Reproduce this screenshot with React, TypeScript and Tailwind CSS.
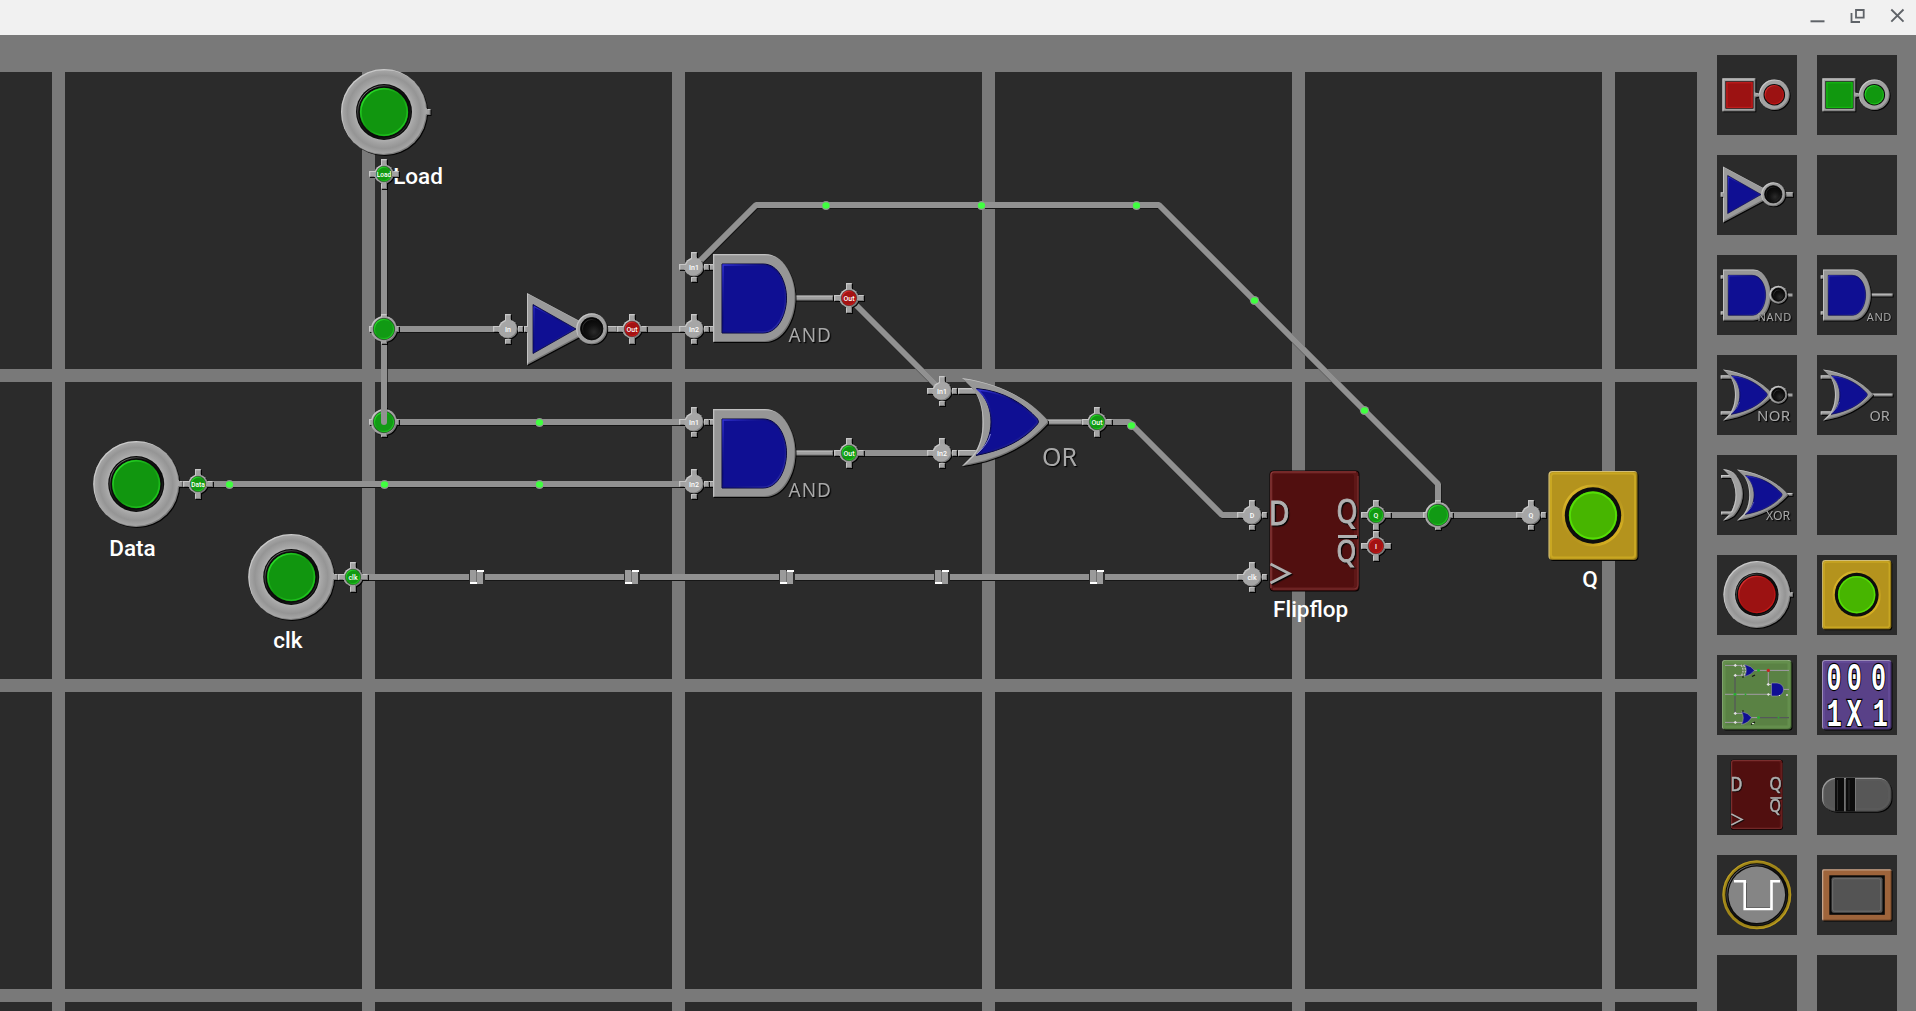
import React from "react";

type Tone = "gray" | "green" | "red";

const FILL: Record<Tone, string> = {
  gray: "#a8a8a8",
  green: "#119a11",
  red: "#a31212",
};

/* Shared filters and gradients for the embossed look of all parts. */
function Defs() {
  return (
    <svg width="0" height="0" className="absolute" aria-hidden="true">
      <defs>
        <filter id="raised" x="-20%" y="-20%" width="140%" height="140%" colorInterpolationFilters="sRGB">
          <feOffset in="SourceAlpha" dx="1.3" dy="1.3" result="off" />
          <feComposite in="SourceAlpha" in2="off" operator="out" result="hi" />
          <feFlood floodColor="#ffffff" floodOpacity="0.4" />
          <feComposite in2="hi" operator="in" result="light" />
          <feOffset in="SourceAlpha" dx="-1.2" dy="-1.2" result="off2" />
          <feComposite in="SourceAlpha" in2="off2" operator="out" result="lo" />
          <feFlood floodColor="#000000" floodOpacity="0.25" />
          <feComposite in2="lo" operator="in" result="dark" />
          <feFlood floodColor="#000000" floodOpacity="0.9" />
          <feComposite in2="off" operator="in" result="shadow" />
          <feMerge>
            <feMergeNode in="shadow" />
            <feMergeNode in="SourceGraphic" />
            <feMergeNode in="dark" />
            <feMergeNode in="light" />
          </feMerge>
        </filter>
        <filter id="cast" x="-10%" y="-10%" width="125%" height="125%" colorInterpolationFilters="sRGB">
          <feDropShadow dx="1.2" dy="1.2" stdDeviation="0" floodColor="#050505" floodOpacity="1" />
        </filter>
        <radialGradient id="disc" cx="0.5" cy="0.5" r="0.5">
          <stop offset="0.62" stopColor="#b4b4b4" />
          <stop offset="0.72" stopColor="#a4a4a4" />
          <stop offset="0.85" stopColor="#959595" />
          <stop offset="0.94" stopColor="#a2a2a2" />
          <stop offset="1" stopColor="#a8a8a8" />
        </radialGradient>
        <radialGradient id="hole" cx="0.6" cy="0.65" r="0.6">
          <stop offset="0" stopColor="#2b2b2b" />
          <stop offset="0.5" stopColor="#121212" />
          <stop offset="1" stopColor="#050505" />
        </radialGradient>
        <linearGradient id="rim" x1="0" y1="0" x2="1" y2="1">
          <stop offset="0" stopColor="#ffffff" stopOpacity="0.65" />
          <stop offset="0.4" stopColor="#ffffff" stopOpacity="0.05" />
          <stop offset="0.65" stopColor="#ffffff" stopOpacity="0" />
          <stop offset="1" stopColor="#ffffff" stopOpacity="0.25" />
        </linearGradient>
        <linearGradient id="capRim" x1="0" y1="0" x2="1" y2="1">
          <stop offset="0" stopColor="#33ff33" stopOpacity="0.9" />
          <stop offset="0.5" stopColor="#33ff33" stopOpacity="0" />
          <stop offset="1" stopColor="#20d020" stopOpacity="0.9" />
        </linearGradient>
        <linearGradient id="redRim" x1="0" y1="0" x2="1" y2="1">
          <stop offset="0" stopColor="#ff5050" stopOpacity="0.9" />
          <stop offset="0.5" stopColor="#e01010" stopOpacity="0.1" />
          <stop offset="1" stopColor="#d02020" stopOpacity="0.9" />
        </linearGradient>
        <linearGradient id="blueRim" x1="0" y1="0" x2="1" y2="1">
          <stop offset="0" stopColor="#3a3ae0" stopOpacity="0.9" />
          <stop offset="0.4" stopColor="#0a0a70" stopOpacity="0.5" />
          <stop offset="1" stopColor="#3434b4" stopOpacity="0.9" />
        </linearGradient>
        <linearGradient id="goldRim" x1="0" y1="0" x2="1" y2="1">
          <stop offset="0" stopColor="#f2cc30" />
          <stop offset="0.5" stopColor="#b5951e" stopOpacity="0.2" />
          <stop offset="1" stopColor="#f0c525" />
        </linearGradient>
      </defs>
    </svg>
  );
}

/* ---------- Parts. Gates have their origin at the left edge, mid height. ---------- */

function GateLabel({ x, y, size, spacing = 0, children }: { x: number; y: number; size: number; spacing?: number; children: string }) {
  return (
    <text
      x={x}
      y={y}
      fill="#a8a8a8"
      fontSize={size}
      letterSpacing={spacing}
      filter="url(#cast)"
      style={{ fontFamily: '"Noto Sans", sans-serif' }}
    >
      {children}
    </text>
  );
}

function AndBody() {
  return (
    <>
      <g filter="url(#raised)">
        <path fill="#969696" d="M0-44H52C70-44 82.500-22 82.500 0S70 44 52 44H0Z" />
      </g>
      <path fill="#0f0f93" stroke="#05053a" strokeWidth="1" d="M9-34H50C66-34 73.500-15 73.500 0S66 35 50 35H9Z" />
      <path fill="none" stroke="url(#blueRim)" strokeWidth="1.400" d="M10-33H50C65-33 72.500-15 72.500 0S65 34 50 34H10Z" />
    </>
  );
}

function AndGate({ stubs = false }: { stubs?: boolean }) {
  return (
    <g>
      <g filter="url(#raised)" fill="#a0a0a0">
        {stubs && <path d="M-4-34H2v6H-4ZM-4 28H2v6H-4Z" />}
        <rect x="80" y="-2.500" width="40" height="5" />
      </g>
      <AndBody />
      <GateLabel x={75.500} y={44} size={19} spacing={1}>AND</GateLabel>
    </g>
  );
}

function OrBody() {
  return (
    <>
      <g filter="url(#raised)">
        <path fill="#979797" d="M0-44C36-39 66-24 86-1.500V1.500C66 24 36 39 0 44L11 33C24 17 24-17 11-33Z" />
      </g>
      <path fill="#0f0f93" stroke="#05053a" strokeWidth="1" d="M14.500-33.500C42-31 62-18 75.500-3Q77.500 0 75.500 2C62 18 42 28 14 33.500C34 17 34-17 14.500-33.500Z" />
      <path fill="none" stroke="url(#blueRim)" strokeWidth="1.500" d="M16-32C42-30 61-17 74.500-2.500Q76 0 74.500 1.500C61 17 42 27 16 32C34 16 34-16 16-32Z" />
      <path fill="none" stroke="#9a9aee" strokeWidth="1" opacity="0.8" d="M28.500 12Q26 22 15 32" />
    </>
  );
}

function OrGate() {
  return (
    <g>
      <g filter="url(#raised)" fill="#a0a0a0">
        <path d="M-4-34H14v6H-4ZM-4 28H14v6H-4Z" />
        <rect x="83" y="-2.500" width="37" height="5" />
      </g>
      <OrBody />
      <GateLabel x={80} y={44} size={25}>OR</GateLabel>
    </g>
  );
}

function Bubble({ x, y, r, hole }: { x: number; y: number; r: number; hole: number }) {
  return (
    <g>
      <circle cx={x} cy={y} r={r} fill="#a0a0a0" filter="url(#raised)" />
      <circle cx={x} cy={y} r={hole} fill="url(#hole)" stroke="#000" strokeWidth="0.800" />
      <circle cx={x} cy={y} r={hole - 2} fill="none" stroke="url(#rim)" strokeWidth="0.800" opacity="0.500" />
    </g>
  );
}

function NotGate() {
  return (
    <g>
      <g filter="url(#raised)" fill="#9a9a9a">
        <rect x="-3" y="-3" width="5" height="6" />
        <rect x="79" y="-3" width="11" height="6" />
        <path d="M0-36L62-3V3L0 36Z" />
      </g>
      <path d="M6-24.500L49 0L6 24.500Z" fill="#0f0f93" stroke="#06063c" strokeWidth="0.800" />
      <path d="M7-22.500L47 0L7 23Z" fill="none" stroke="url(#blueRim)" strokeWidth="1" />
      <Bubble x={64.700} y={-0.300} r={15.500} hole={11.200} />
    </g>
  );
}

function RoundButton({ tone }: { tone: "green" | "red" }) {
  return (
    <g>
      <g filter="url(#raised)">
        <path d="M40-7L43-3H46.500V3H43L40 7Z" fill="#a0a0a0" />
        <circle r="43" fill="url(#disc)" />
      </g>
      <circle r="28" fill="#0b0b0b" />
      <circle r="26.300" fill="none" stroke="url(#rim)" strokeWidth="0.900" />
      <circle r="24.200" fill={tone === "green" ? "#11960f" : "#9c1212"} />
      <circle r="23.200" fill="none" stroke={tone === "green" ? "url(#capRim)" : "url(#redRim)"} strokeWidth="1.600" />
    </g>
  );
}

function Lamp() {
  return (
    <g>
      <rect x="-44.500" y="-44.500" width="89" height="89" rx="4" fill="#b4931d" filter="url(#raised)" />
      <rect x="-42" y="-42" width="84" height="84" rx="3" fill="none" stroke="#c9a722" strokeWidth="2" />
      <circle r="29.500" fill="none" stroke="url(#goldRim)" strokeWidth="3" />
      <circle r="28.200" fill="#0d0d0d" />
      <circle r="24.200" fill="#47b500" />
      <circle r="23" fill="none" stroke="#5aec08" strokeWidth="1.800" opacity="0.750" />
    </g>
  );
}

function FlipflopBody() {
  return (
    <g>
      <rect x="-.5" y="-.5" width="90" height="121" rx="4" fill="#0a0202" />
      <rect width="88.500" height="119.500" rx="4" fill="#5e1717" />
      <rect x="3" y="3" width="81" height="113" rx="2" fill="#510f0f" />
      <path d="M1 117V4Q1 1 4 1H86" fill="none" stroke="#8b3c3c" strokeWidth="1.200" />
      <path d="M3 118H84Q88 118 88 113V5" fill="none" stroke="#7a3030" strokeWidth="1.200" />
      <g fill="#b0b0b0" stroke="#b0b0b0" strokeWidth="1" filter="url(#cast)" style={{ fontFamily: '"Noto Sans", sans-serif' }}>
        <g transform="translate(-1 53.500) scale(.84 1)"><text fontSize="33.500">D</text></g>
        <g transform="translate(66.500 51.500) scale(.84 1)"><text fontSize="32">Q</text></g>
        <g transform="translate(66.500 90.500) scale(.84 1)"><text fontSize="30">Q</text></g>
        <rect x="68.500" y="64.500" width="18" height="2" />
        <path fill="none" strokeWidth="2.800" d="M0.500 93L19 102.500L0.500 112" />
      </g>
    </g>
  );
}

/* ---------- Terminals and wires ---------- */

function Terminal({ x, y, tone = "gray", label }: { x: number; y: number; tone?: Tone; label: string }) {
  const gray = tone === "gray";
  return (
    <g transform={`translate(${x} ${y})`}>
      <g filter="url(#raised)" fill="#a2a2a2">
        <path d="M-15-3H-9V3H-15ZM10-3H15V3H10ZM-3-15H3V-9H-3ZM-3 10H3V15H-3Z" />
        {!gray && <path d="M-11-3H11V3H-11ZM-3-11H3V11H-3Z" />}
        <circle r={9.600} fill={gray ? "#a6a6a6" : "#a2a2a2"} />
      </g>
      {!gray && (
        <>
          <circle r="7.700" fill={FILL[tone]} stroke="#222" strokeWidth="0.500" />
          <circle r="6.800" fill="none" stroke={tone === "green" ? "url(#capRim)" : "url(#redRim)"} strokeWidth="1.200" />
        </>
      )}
      <text
        y="2.500"
        textAnchor="middle"
        fill="#fff"
        fontSize={label.length > 3 ? 6.5 : 7}
        style={{ fontFamily: "Roboto, sans-serif", fontWeight: 500 }}
      >
        {label}
      </text>
    </g>
  );
}

function Junction({ x, y }: { x: number; y: number }) {
  return (
    <g transform={`translate(${x} ${y})`}>
      <g filter="url(#raised)" fill="#a2a2a2">
        <path d="M-15-3H15V3H-15ZM-3-15H3V15H-3Z" />
        <circle r="13" />
      </g>
      <circle r="10.700" fill="#119a14" stroke="#222" strokeWidth="0.600" />
      <circle r="9.700" fill="none" stroke="url(#capRim)" strokeWidth="1.200" />
    </g>
  );
}

function Wire({ d }: { d: string }) {
  return (
    <g fill="none" strokeWidth="6" strokeLinejoin="bevel">
      <path d={d} stroke="#161616" transform="translate(.7 1)" />
      <path d={d} stroke="#919191" />
    </g>
  );
}

function Signal({ x, y }: { x: number; y: number }) {
  return (
    <g>
      <circle cx={x} cy={y} r="4.600" fill="#919191" />
      <ellipse cx={x} cy={y} rx="3.600" ry="3.300" fill="#40ff40" />
    </g>
  );
}

/* A clock edge travelling along the wire. */
function Pulse({ x, y }: { x: number; y: number }) {
  return (
    <g transform={`translate(${x} ${y})`} shapeRendering="crispEdges">
      <rect x="-8" y="-3" width="16" height="7" fill="#2b2b2b" />
      <rect x="-7" y="-7" width="6" height="12" fill="#9a9a9a" />
      <rect x="-7" y="5" width="7" height="2" fill="#fff" />
      <rect x="-1" y="-6" width="1" height="11" fill="#707070" />
      <rect x="0" y="-5" width="6" height="12" fill="#9a9a9a" />
      <rect x="0" y="-7" width="7" height="2" fill="#fff" />
    </g>
  );
}

function Caption({ x, y, children }: { x: number; y: number; children: string }) {
  return (
    <text x={x} y={y} fill="#fff" fontSize="22.500" style={{ fontFamily: "Roboto, sans-serif", fontWeight: 500 }}>
      {children}
    </text>
  );
}

const wires = [
  "M694 267L756 205H1159L1438 484V515",
  "M849 298L942 391",
  "M1097 422H1129L1222 515H1252",
  "M384 174V329",
  "M384 329V422",
  "M384 329H508",
  "M632 329H694",
  "M384 422H694",
  "M198 484H694",
  "M849 453H942",
  "M353 577H1252",
  "M1376 515H1531",
];

const signals = [
  [826, 205.5], [981.5, 205.5], [1136.5, 205.5], [1254.5, 300.5], [1364.5, 410.5],
  [539.5, 422.5], [229.5, 484.5], [384.500, 484.5], [539.5, 484.5], [1131.500, 425.5],
];

/* Diagram of the circuit; its coordinates are those of the window. */
function Circuit() {
  return (
    <svg className="pointer-events-none absolute left-0 top-0" width="1697" height="976" viewBox="0 35 1697 976">
      {wires.map((d) => <Wire key={d} d={d} />)}
      {signals.map(([x, y]) => <Signal key={`${x}-${y}`} x={x} y={y} />)}
      {[477, 632, 787, 942, 1097].map((x) => <Pulse key={x} x={x} y={577} />)}

      <g transform="translate(384 112)"><RoundButton tone="green" /></g>
      <g transform="translate(136.200 484)"><RoundButton tone="green" /></g>
      <g transform="translate(291.200 577)"><RoundButton tone="green" /></g>
      <g transform="translate(527 329)"><NotGate /></g>
      <g transform="translate(713 298)"><AndGate stubs /></g>
      <g transform="translate(713 453)"><AndGate stubs /></g>
      <g transform="translate(962 422)"><OrGate /></g>
      <g transform="translate(1270 471)"><FlipflopBody /></g>
      <g transform="translate(1593 515.500)"><Lamp /></g>

      <Caption x={393.200} y={183.500}>Load</Caption>
      <Caption x={109.200} y={555.500}>Data</Caption>
      <Caption x={273.200} y={648}>clk</Caption>
      <Caption x={1273} y={617.300}>Flipflop</Caption>
      <Caption x={1582.300} y={586.500}>Q</Caption>

      <Terminal x={384} y={174} tone="green" label="Load" />
      <Terminal x={198} y={484} tone="green" label="Data" />
      <Terminal x={353} y={577} tone="green" label="clk" />
      <Terminal x={508} y={329} label="In" />
      <Terminal x={632} y={329} tone="red" label="Out" />
      <Terminal x={694} y={267} label="In1" />
      <Terminal x={694} y={329} label="In2" />
      <Terminal x={849} y={298} tone="red" label="Out" />
      <Terminal x={694} y={422} label="In1" />
      <Terminal x={694} y={484} label="In2" />
      <Terminal x={849} y={453} tone="green" label="Out" />
      <Terminal x={942} y={391} label="In1" />
      <Terminal x={942} y={453} label="In2" />
      <Terminal x={1097} y={422} tone="green" label="Out" />
      <Terminal x={1252} y={515} label="D" />
      <Terminal x={1252} y={577} label="clk" />
      <Terminal x={1376} y={515} tone="green" label="Q" />
      <Terminal x={1376} y={546} tone="red" label="I" />
      <Terminal x={1531} y={515} label="Q" />
      <Junction x={384} y={329} />
      <Junction x={384} y={422} />
      <Junction x={1438} y={515} />
      <path d="M381 407H387V422A3 3 0 0 1 381 422Z" fill="#919191" />
    </svg>
  );
}

/* ---------- Palette icons, each on an 80 x 80 tile ---------- */

function SourceIcon({ tone }: { tone: "green" | "red" }) {
  const fill = tone === "green" ? "#11980f" : "#9c1212";
  const rim = tone === "green" ? "#14c012" : "#c92020";
  return (
    <g>
      <g filter="url(#raised)" fill="#a2a2a2">
        <path d="M36 37L42 38.500L46 36V44L42 41.500L36 43Z" />
        <rect x="5.300" y="23.300" width="33" height="33" />
        <circle cx="57.300" cy="39.700" r="15.300" />
      </g>
      <rect x="8.700" y="26.500" width="27.500" height="27" fill={fill} stroke="#111" strokeWidth="0.600" />
      <rect x="10" y="27.800" width="25" height="24.500" fill="none" stroke={rim} strokeWidth="0.900" />
      <circle cx="57.300" cy="39.700" r="10.800" fill="#0c0c0c" />
      <circle cx="57.300" cy="39.700" r="9.700" fill={fill} />
      <circle cx="57.300" cy="39.700" r="9.200" fill="none" stroke={tone === "green" ? "url(#capRim)" : "url(#redRim)"} strokeWidth="1.200" />
    </g>
  );
}

function NandIcon() {
  return (
    <g>
      <rect x="70" y="38.500" width="5.500" height="3" fill="#a0a0a0" />
      <g transform="translate(6 40) scale(.58)">
        <path filter="url(#raised)" fill="#a0a0a0" d="M-4-34H2v6H-4ZM-4 28H2v6H-4Z" />
        <AndBody />
      </g>
      <Bubble x={61.300} y={39.700} r={9} hole={6.600} />
      <GateLabel x={40.500} y={65.500} size={11} spacing={0.700}>NAND</GateLabel>
    </g>
  );
}

function NorIcon() {
  return (
    <g>
      <rect x="70" y="38.500" width="5.500" height="3" fill="#a0a0a0" />
      <g transform="translate(6 40) scale(.58)">
        <path filter="url(#raised)" fill="#a0a0a0" d="M-4-34H14v6H-4ZM-4 28H14v6H-4Z" />
        <OrBody />
      </g>
      <Bubble x={61.300} y={39.700} r={9} hole={6.600} />
      <GateLabel x={40} y={65.500} size={15} spacing={0.300}>NOR</GateLabel>
    </g>
  );
}

function XorIcon() {
  return (
    <g>
      <g filter="url(#raised)" fill="#a0a0a0">
        <path d="M4 20H15v3H4ZM4 56.500H15v3H4Z" />
        <rect x="68" y="38" width="7.500" height="2.800" />
        <path d="M6 14Q15 15 19 20C28.500 32 28.500 48 17 61Q11 65 6 65.500L12.500 59C20.500 48 20.500 32 12.500 20.500Z" />
      </g>
      <g transform="translate(20 40) scale(.59 .58)"><OrBody /></g>
      <GateLabel x={49} y={65.300} size={12.300}>XOR</GateLabel>
    </g>
  );
}

function BoardIcon() {
  return (
    <g>
      <rect x="5" y="5" width="69.500" height="69.500" rx="3" fill="#5a8244" filter="url(#raised)" />
      <rect x="7" y="7" width="65" height="65" rx="2" fill="none" stroke="#648f4d" strokeWidth="3" />
      <g fill="none" stroke="#a29ba6" strokeWidth="1">
        <path d="M8 10.400H25M18 20.400H26M37 15.400H72M51.300 15V29.500H55M8 39.300H55M65 34.400H72M8 67.400H26M18 58.400H26M34 62.600H42" />
        <path d="M18 20V58.500M43 62.600H72" stroke="#55585a" strokeWidth="1.300" />
        <path d="M24 10Q28 15.500 24 21M26.500 10Q30.500 15.500 26.500 21" stroke="#bcbcbc" strokeWidth="1.300" strokeDasharray="2 1" />
      </g>
      <g fill="#0f0f93" stroke="#a8a8a8" strokeWidth="0.500">
        <path d="M27.500 9.500Q34.500 11 37.500 15.400Q33.500 20.500 27.500 21.500Q31 15.500 27.500 9.500Z" />
        <path d="M24.500 56.500Q31.500 58 34.500 62.600Q31 68.500 24.500 69.500Q28 63 24.500 56.500Z" />
        <path d="M54.500 28H60Q66.500 29 66.500 34.500Q66.500 40 60 41H54.500Z" />
      </g>
      <path d="M35 21.500L38 20M34 69.500L38 67M25 22H27M25 56H27" stroke="#151515" strokeWidth="1.200" />
      <g fill="#e0e0e0">
        <path d="M16.500 10.400L18.300 8.700L20 10.400L18.300 12ZM16.500 20.400L18.300 18.700L20 20.400L18.300 22ZM49.500 29.400L51.300 27.700L53 29.400L51.300 31ZM16.500 58.400L18.300 56.700L20 58.400L18.300 60ZM16.500 67.400L18.300 65.700L20 67.400L18.300 69Z" />
        <rect x="69" y="39" width="2" height="2" fill="#b7b7b7" />
        <path d="M35 68h2v1h-2ZM62 40h1v1h-1Z" />
      </g>
      <g fill="#22b52c">
        <circle cx="41.500" cy="15.400" r="1.400" />
        <circle cx="18" cy="39.300" r="1.400" />
        <circle cx="28.500" cy="39.300" r="0.900" />
        <circle cx="41.500" cy="62.600" r="1.400" />
        <circle cx="61.500" cy="62.600" r="0.900" />
      </g>
      <circle cx="51.300" cy="15.400" r="1.600" fill="#c92020" />
      <path d="M51.300 38V41M50 39.400H53" stroke="#e8e8e8" strokeWidth="0.800" />
    </g>
  );
}

function TruthTableIcon() {
  const cells: [string, number, number][] = [
    ["0", 17, 34.8], ["0", 37.2, 34.8], ["0", 61.4, 34.8],
    ["1", 17.300, 71], ["X", 37.2, 71], ["1", 63.3, 71],
  ];
  return (
    <g>
      <rect x="5" y="5" width="69.500" height="69.500" rx="3" fill="#594188" filter="url(#raised)" />
      <rect x="7" y="7" width="65" height="65" rx="2" fill="none" stroke="#634a96" strokeWidth="2" />
      <g
        textAnchor="middle"
        fill="#fff"
        stroke="#000"
        strokeWidth="2.400"
        style={{ fontFamily: '"Liberation Mono", monospace', fontSize: 38, fontWeight: 700, paintOrder: "stroke" }}
      >
        {cells.map(([c, x, y]) => (
          <g key={`${c}${x}${y}`} transform={`translate(${x} ${y}) scale(.66 1)`}>
            <text>{c}</text>
          </g>
        ))}
      </g>
    </g>
  );
}

function SwitchIcon() {
  return (
    <g>
      <rect x="5" y="22.700" width="69.500" height="34" rx="14" fill="#5a5a5a" filter="url(#raised)" />
      <rect x="8" y="26" width="63" height="27" rx="11" fill="#575757" />
      <g fill="#0c0c0c">
        <rect x="18" y="23" width="9" height="33.500" />
        <rect x="29" y="23" width="9" height="33.500" />
      </g>
      <path d="M20.500 25V55M32 25V55" stroke="#2c2c2c" strokeWidth="1" />
      <path d="M27.700 24V56M38.500 24V56" stroke="#858585" strokeWidth="0.700" />
    </g>
  );
}

function ClockIcon() {
  return (
    <g>
      <circle cx="39.800" cy="39.800" r="34.500" fill="#9c8318" />
      <circle cx="39.800" cy="39.800" r="33.800" fill="none" stroke="url(#goldRim)" strokeWidth="1.200" opacity="0.700" />
      <circle cx="39.800" cy="39.800" r="31.500" fill="#0b0b0b" />
      <circle cx="39.800" cy="39.800" r="30" fill="none" stroke="url(#rim)" strokeWidth="0.900" />
      <circle cx="39.800" cy="39.800" r="28.300" fill="#858585" />
      <path d="M29 28V52.500H53" fill="none" stroke="#333" strokeWidth="1" />
      <path d="M17 26.200H27.700V54H54.500V26.200H63" fill="none" stroke="#fff" strokeWidth="2.600" />
    </g>
  );
}

function DisplayIcon() {
  return (
    <g>
      <rect x="5" y="14.300" width="69.500" height="51.300" rx="1.500" fill="#9e643b" filter="url(#raised)" />
      <rect x="12.300" y="20.300" width="55.500" height="39.500" fill="#090909" />
      <rect x="14.500" y="22.300" width="51" height="35.500" rx="2" fill="#545454" />
      <rect x="15.700" y="23.700" width="48" height="32.500" rx="2" fill="none" stroke="#747474" strokeWidth="0.800" />
    </g>
  );
}

const tiles: (React.ReactNode | null)[] = [
  <SourceIcon tone="red" />,
  <SourceIcon tone="green" />,
  <g transform="translate(6 39.500) scale(.777)"><NotGate /></g>,
  null,
  <NandIcon />,
  <g transform="translate(6 40) scale(.58)"><AndGate stubs /></g>,
  <NorIcon />,
  <g transform="translate(6 40) scale(.58)"><OrGate /></g>,
  <XorIcon />,
  null,
  <g transform="translate(39.800 39.500) scale(.777)"><RoundButton tone="red" /></g>,
  <g transform="translate(39.700 39.700) scale(.777)"><Lamp /></g>,
  <BoardIcon />,
  <TruthTableIcon />,
  <g transform="translate(14 5) scale(.58)"><FlipflopBody /></g>,
  <SwitchIcon />,
  <ClockIcon />,
  <DisplayIcon />,
  null,
  null,
];

function Palette() {
  return (
    <aside className="grid w-[219px] shrink-0 auto-rows-[80px] grid-cols-[80px_80px] gap-5 overflow-hidden px-5 pt-5">
      {tiles.map((icon, i) => (
        <button key={i} className="block size-20 bg-[#2b2b2b]">
          {icon && <svg width="80" height="80" viewBox="0 0 80 80" className="overflow-visible">{icon}</svg>}
        </button>
      ))}
    </aside>
  );
}

function TitleBar() {
  return (
    <header className="flex h-[35px] shrink-0 items-center justify-end bg-[#f1f1f1] text-[#5f6368]">
      <button className="h-full w-10" aria-label="Minimize">
        <svg width="40" height="35" fill="none" stroke="currentColor" strokeWidth="2"><path d="M14.500 21.300H28.500" /></svg>
      </button>
      <button className="h-full w-10" aria-label="Restore">
        <svg width="40" height="35" fill="none" stroke="currentColor" strokeWidth="1.800">
          <path d="M20 10H27.700V17.700H20ZM15.500 13V22H24" />
        </svg>
      </button>
      <button className="h-full w-10" aria-label="Close">
        <svg width="40" height="35" fill="none" stroke="currentColor" strokeWidth="1.900"><path d="M15.300 9.500L27.500 21.700M27.500 9.500L15.300 21.700" /></svg>
      </button>
    </header>
  );
}

export default function App() {
  return (
    <div className="flex h-[1011px] w-[1916px] flex-col overflow-hidden bg-[#797979]">
      <Defs />
      <TitleBar />
      <div className="flex min-h-0 flex-1">
        <main className="relative w-[1697px] shrink-0 overflow-hidden pt-[37px]">
          <div className="grid grid-cols-[52px_repeat(5,297px)_82px] grid-rows-[297px_297px_297px_9px] gap-[13px]">
            {Array.from({ length: 28 }, (_, i) => (
              <div key={i} className="bg-[#2b2b2b]" />
            ))}
          </div>
          <Circuit />
        </main>
        <Palette />
      </div>
    </div>
  );
}
